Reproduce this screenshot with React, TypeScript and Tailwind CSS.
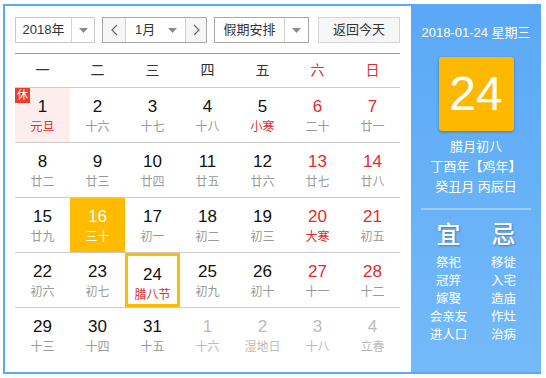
import { Fragment } from "react";

type Day = {
  d: number;
  l: string;
  lunarRed?: boolean;
  other?: boolean;
  rest?: boolean;
  picked?: boolean;
  today?: boolean;
};

const weeks: Day[][] = [
  [
    { d: 1, l: "元旦", lunarRed: true, rest: true },
    { d: 2, l: "十六" },
    { d: 3, l: "十七" },
    { d: 4, l: "十八" },
    { d: 5, l: "小寒", lunarRed: true },
    { d: 6, l: "二十" },
    { d: 7, l: "廿一" },
  ],
  [
    { d: 8, l: "廿二" },
    { d: 9, l: "廿三" },
    { d: 10, l: "廿四" },
    { d: 11, l: "廿五" },
    { d: 12, l: "廿六" },
    { d: 13, l: "廿七" },
    { d: 14, l: "廿八" },
  ],
  [
    { d: 15, l: "廿九" },
    { d: 16, l: "三十", picked: true },
    { d: 17, l: "初一" },
    { d: 18, l: "初二" },
    { d: 19, l: "初三" },
    { d: 20, l: "大寒", lunarRed: true },
    { d: 21, l: "初五" },
  ],
  [
    { d: 22, l: "初六" },
    { d: 23, l: "初七" },
    { d: 24, l: "腊八节", lunarRed: true, today: true },
    { d: 25, l: "初九" },
    { d: 26, l: "初十" },
    { d: 27, l: "十一" },
    { d: 28, l: "十二" },
  ],
  [
    { d: 29, l: "十三" },
    { d: 30, l: "十四" },
    { d: 31, l: "十五" },
    { d: 1, l: "十六", other: true },
    { d: 2, l: "湿地日", other: true },
    { d: 3, l: "十八", other: true },
    { d: 4, l: "立春", other: true },
  ],
];

const weekdays = ["一", "二", "三", "四", "五", "六", "日"];
const good = ["祭祀", "冠笄", "嫁娶", "会亲友", "进人口"];
const bad = ["移徙", "入宅", "造庙", "作灶", "治病"];

function Caret() {
  return (
    <svg width="9" height="5" viewBox="0 0 9 5">
      <path d="M0 0h9L4.5 5z" fill="#8a8a8a" />
    </svg>
  );
}

function DayCell({ day, col }: { day: Day; col: number }) {
  const weekend = col >= 5;
  let numColor = weekend ? "text-[#e02d2d]" : "text-[#111]";
  let lunarColor = day.lunarRed ? "text-[#e02d2d]" : "text-[#999]";
  let bg = "";
  if (day.other) {
    numColor = "text-[#bbb]";
    lunarColor = "text-[#bbb]";
  }
  if (day.rest) bg = "bg-[#fdeded]";
  if (day.picked) {
    bg = "bg-[#ffbb00]";
    numColor = "text-white";
    lunarColor = "text-white";
  }
  return (
    <div
      className={`relative flex flex-col items-center pt-[9px] ${bg} ${
        day.today ? "border-[3px] border-[#ffbb00] pt-[6px]" : ""
      }`}
    >
      {day.rest && (
        <span className="absolute left-0 top-0 flex h-[15px] w-[15px] items-center justify-center bg-[#f03c2c] text-[11px] leading-none text-white">
          休
        </span>
      )}
      <span className={`text-[17px] leading-[20px] ${numColor}`}>{day.d}</span>
      <span className={`mt-[2px] text-[12px] leading-[16px] ${lunarColor}`}>
        {day.l}
      </span>
    </div>
  );
}

function App() {
  return (
    <Fragment>
      <div className="h-[378px] w-[546px] bg-white pl-[3px] pt-[4px] font-[family-name:'Liberation_Sans','Noto_Sans_CJK_SC',sans-serif]">
        <div className="flex h-[370px] w-[538px] border-y-2 border-l-2 border-[#5ba8f5]">
          <div className="w-[406px] pl-[10px] pt-[11px]">
            <div className="flex h-[26px] text-[13px] text-[#333]">
              <div className="flex w-[80px] border border-[#c8c8c8]">
                <div className="flex w-[55px] items-center justify-center">2018年</div>
                <div className="flex flex-1 items-center justify-center border-l border-[#d4d4d4]">
                  <Caret />
                </div>
              </div>
              <div className="ml-[7px] flex w-[105px] border border-[#a8a8a8]">
                <div className="flex w-[22px] items-center justify-center bg-[#f6f6f6]">
                  <svg width="7" height="12" viewBox="0 0 7 12">
                    <path d="M6 1L1 6l5 5" fill="none" stroke="#666" strokeWidth="1.2" />
                  </svg>
                </div>
                <div className="flex w-[61px] items-center border-x border-[#d0d0d0] pl-[9px]">
                  <span>1月</span>
                  <span className="ml-auto mr-[8px] flex">
                    <Caret />
                  </span>
                </div>
                <div className="flex flex-1 items-center justify-center bg-[#f6f6f6]">
                  <svg width="7" height="12" viewBox="0 0 7 12">
                    <path d="M1 1l5 5-5 5" fill="none" stroke="#666" strokeWidth="1.2" />
                  </svg>
                </div>
              </div>
              <div className="ml-[7px] flex w-[95px] border border-[#a8a8a8]">
                <div className="flex w-[69px] items-center justify-center">假期安排</div>
                <div className="flex flex-1 items-center justify-center border-l border-[#d0d0d0]">
                  <Caret />
                </div>
              </div>
              <button className="ml-[9px] w-[82px] border border-[#d4d4d4] bg-[#f6f6f6] text-[13px] text-[#333]">
                返回今天
              </button>
            </div>

            <div className="mt-[10px] h-px w-[385px] bg-[#5ba8f5]" />

            <div className="grid h-[33px] w-[385px] grid-cols-7 text-[14px]">
              {weekdays.map((w, i) => (
                <div
                  key={w}
                  className={`flex items-center justify-center ${
                    i >= 5 ? "text-[#e02d2d]" : "text-[#333]"
                  }`}
                >
                  {w}
                </div>
              ))}
            </div>

            {weeks.map((row, r) => (
              <div
                key={r}
                className="grid h-[55px] w-[385px] grid-cols-7 border-t border-[#cccccc]"
              >
                {row.map((day, c) => (
                  <DayCell key={c} day={day} col={c} />
                ))}
              </div>
            ))}
          </div>

          <div className="flex w-[130px] flex-col items-center bg-gradient-to-b from-[#5aa8f6] to-[#74baf9] pt-[18px] text-white">
            <div className="text-[13px] leading-[18px]">2018-01-24 星期三</div>
            <div className="mt-[15px] flex h-[74px] w-[75px] items-center justify-center rounded-[3px] bg-[#ffb800] text-[48px] leading-none shadow-[0_1px_3px_rgba(0,0,0,0.3)]">
              24
            </div>
            <div className="mt-[6px] text-[13px] leading-[20px]">腊月初八</div>
            <div className="text-[13px] leading-[20px]">丁酉年【鸡年】</div>
            <div className="text-[13px] leading-[20px]">癸丑月 丙辰日</div>
            <div className="mt-[11px] h-[2px] w-[110px] bg-[#9dcdfa]" />
            <div className="mt-[11px] grid w-[110px] grid-cols-2">
              <div className="flex flex-col items-center">
                <div className="text-[24px] font-medium leading-[28px] [text-shadow:1px_1px_2px_rgba(0,0,0,0.3)]">
                  宜
                </div>
                <div className="mt-[5px] flex flex-col items-center text-[12.5px] leading-[18px]">
                  {good.map((g) => (
                    <span key={g}>{g}</span>
                  ))}
                </div>
              </div>
              <div className="flex flex-col items-center">
                <div className="text-[24px] font-medium leading-[28px] [text-shadow:1px_1px_2px_rgba(0,0,0,0.3)]">
                  忌
                </div>
                <div className="mt-[5px] flex flex-col items-center text-[12.5px] leading-[18px]">
                  {bad.map((b) => (
                    <span key={b}>{b}</span>
                  ))}
                </div>
              </div>
            </div>
          </div>
        </div>
      </div>
    </Fragment>
  );
}

export default App;
